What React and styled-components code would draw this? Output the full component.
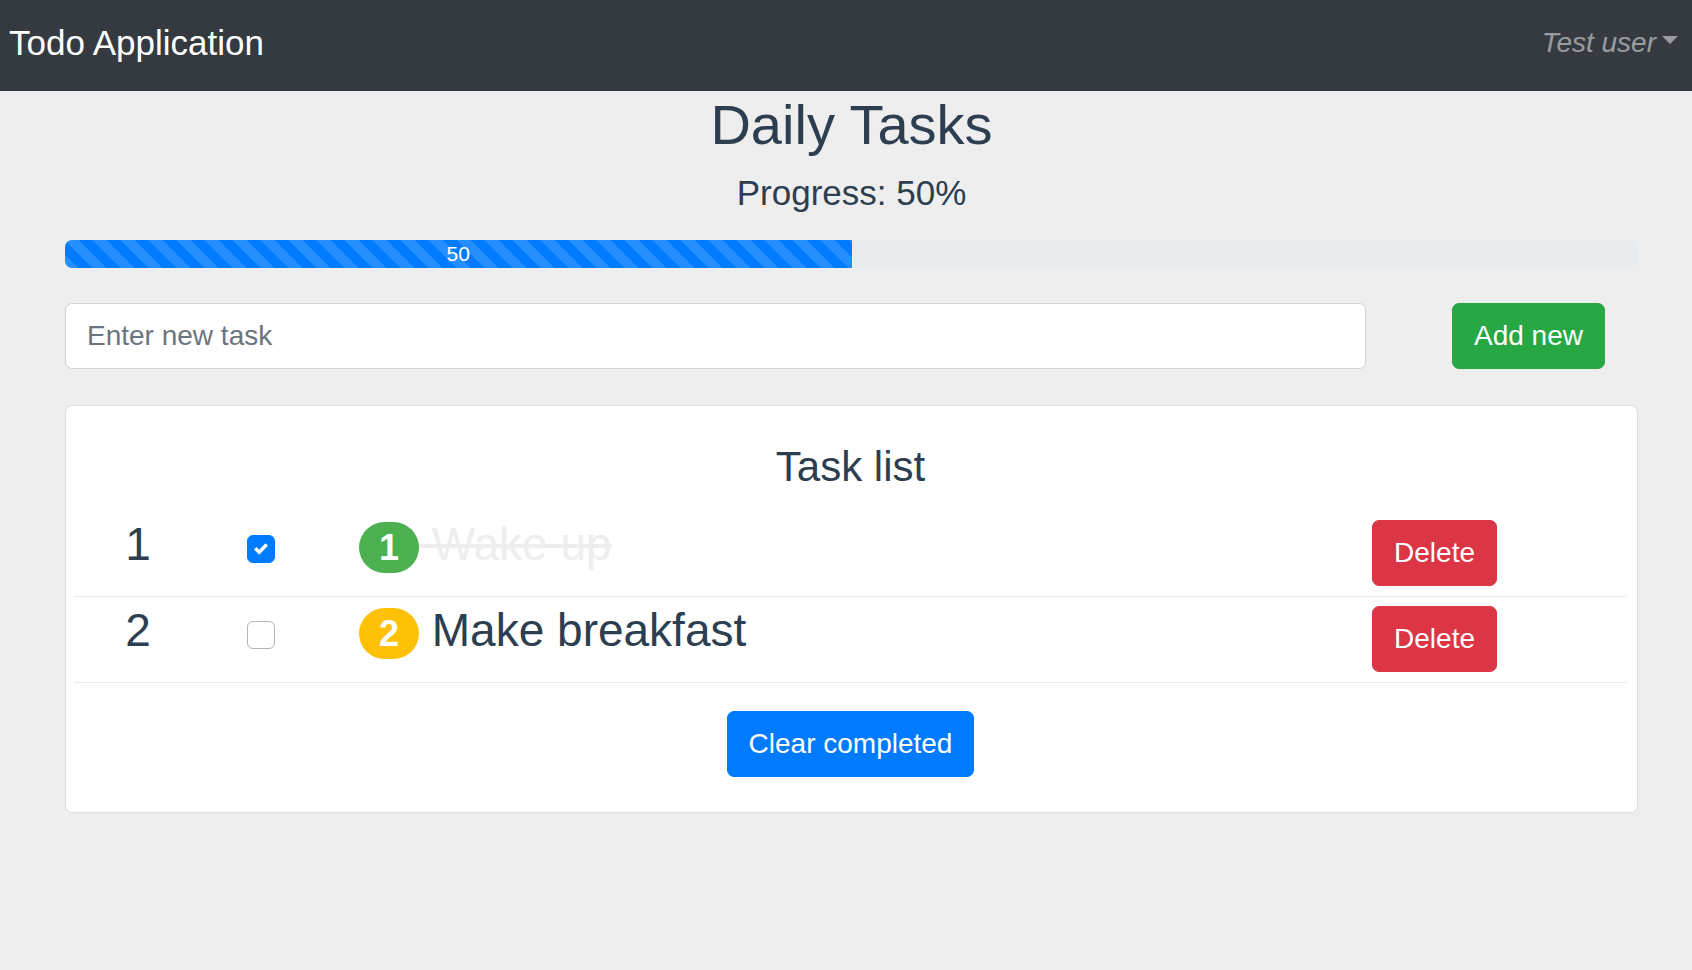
import styled, { createGlobalStyle } from "styled-components";

const GlobalStyle = createGlobalStyle`
  html, body {
    margin: 0;
    padding: 0;
    background: #eeeeee;
  }
  body {
    font-family: "Liberation Sans", Arial, sans-serif;
    color: #2c3e50;
  }
  * {
    box-sizing: border-box;
  }
`

const Navbar = styled.nav`
  display: flex;
  align-items: center;
  justify-content: space-between;
  height: 91px;
  padding: 0 14px 5px 9px;
  background-color: #343a40;
`

const Brand = styled.a`
  color: #ffffff;
  font-size: 35px;
  line-height: 1.5;
  text-decoration: none;
`

const UserMenu = styled.a`
  display: flex;
  align-items: center;
  color: rgba(255, 255, 255, 0.5);
  font-size: 28px;
  font-style: italic;
  line-height: 1.5;
  text-decoration: none;

  &::after {
    content: "";
    margin-left: 6px;
    margin-bottom: 6px;
    border-top: 8px solid currentColor;
    border-left: 8px solid transparent;
    border-right: 8px solid transparent;
  }
`

const Page = styled.main`
  padding: 0 54px 40px 65px;
  text-align: center;
`

const Title = styled.h2`
  margin: 0 0 14px;
  font-size: 56px;
  font-weight: 400;
  line-height: 1.2;
`

const Subtitle = styled.h5`
  margin: 0 0 26px;
  font-size: 35px;
  font-weight: 400;
  line-height: 1.2;
`

const Progress = styled.div`
  display: flex;
  height: 28px;
  overflow: hidden;
  border-radius: 7px;
  background-color: #e9ecef;
`

const ProgressFill = styled.div`
  color: #ffffff;
  font-size: 21px;
  line-height: 28px;
  text-align: center;
  background-color: #007bff;
  background-image: linear-gradient(
    45deg,
    rgba(255, 255, 255, 0.15) 25%,
    transparent 25%,
    transparent 50%,
    rgba(255, 255, 255, 0.15) 50%,
    rgba(255, 255, 255, 0.15) 75%,
    transparent 75%,
    transparent
  );
  background-size: 28px 28px;
`

const InputRow = styled.form`
  display: grid;
  grid-template-columns: 1fr 219px;
  column-gap: 53px;
  margin-top: 35px;
`

const TaskInput = styled.input`
  height: 66px;
  padding: 0 21px;
  font-family: inherit;
  font-size: 28px;
  color: #495057;
  background: #ffffff;
  border: 1px solid #ced4da;
  border-radius: 7px;
  outline: none;

  &::placeholder {
    color: #6c757d;
  }
`

const Button = styled.button`
  justify-self: center;
  height: 66px;
  padding: 0 21px;
  font-family: inherit;
  font-size: 28px;
  line-height: 1.5;
  color: #ffffff;
  border: 1px solid ${props => props.$color};
  border-radius: 7px;
  background-color: ${props => props.$color};
  cursor: pointer;
`

const Card = styled.section`
  margin-top: 36px;
  padding: 36px 10px 35px 8px;
  background: #ffffff;
  border: 1px solid rgba(0, 0, 0, 0.125);
  border-radius: 7px;
`

const CardTitle = styled.h4`
  margin: 0 0 18px;
  font-size: 42px;
  font-weight: 400;
  line-height: 1.2;
`

const Row = styled.div`
  display: grid;
  grid-template-columns: 128px 157px 1fr auto;
  align-items: center;
  height: 86px;
  padding-right: 130px;
  border-bottom: 1px solid #e9ecef;
`

const Index = styled.div`
  padding-bottom: 17px;
  font-size: 46px;
  line-height: 1.2;
  text-align: center;
`

const Check = styled.span`
  display: flex;
  align-items: center;
  justify-content: center;
  width: 28px;
  height: 28px;
  margin: 0 0 8px 45px;
  border: 1px solid ${props => (props.$checked ? "#007bff" : "#adb5bd")};
  border-radius: 6px;
  background: ${props => (props.$checked ? "#007bff" : "#ffffff")};
`

const Label = styled.div`
  display: flex;
  align-items: center;
  padding-bottom: 17px;
  text-align: left;
`

const Badge = styled.span`
  display: flex;
  align-items: center;
  justify-content: center;
  flex: 0 0 60px;
  height: 51px;
  margin-top: 6px;
  border-radius: 999px;
  background-color: ${props => props.$color};
  color: #ffffff;
  font-size: 36px;
  font-weight: 700;
  line-height: 1;
`

const TaskText = styled.span`
  font-size: 46px;
  line-height: 1.2;
  white-space: pre;
  color: ${props => (props.$done ? "#eeeeee" : "#2c3e50")};
  text-decoration: ${props => (props.$done ? "line-through" : "none")};
`

const Footer = styled.div`
  display: flex;
  justify-content: center;
  margin-top: 28px;
`

const tasks = [
  { id: 1, title: "Wake up", done: true, color: "#4caf50" },
  { id: 2, title: "Make breakfast", done: false, color: "#ffc107" },
]

const CheckIcon = () => (
  <svg width="14" height="14" viewBox="0 0 8 8">
    <path fill="#ffffff" d="M6.564.75l-3.59 3.612-1.538-1.55L0 4.26 2.974 7.25 8 2.193z" />
  </svg>
)

const App = () => {
  const progress = Math.round((tasks.filter(t => t.done).length / tasks.length) * 100)

  return (
    <>
      <GlobalStyle />
      <Navbar>
        <Brand href="#">Todo Application</Brand>
        <UserMenu href="#">Test user</UserMenu>
      </Navbar>

      <Page>
        <Title>Daily Tasks</Title>
        <Subtitle>Progress: {progress}%</Subtitle>

        <Progress>
          <ProgressFill style={{ width: `${progress}%` }}>{progress}</ProgressFill>
        </Progress>

        <InputRow onSubmit={e => e.preventDefault()}>
          <TaskInput placeholder="Enter new task" />
          <Button type="submit" $color="#28a745">Add new</Button>
        </InputRow>

        <Card>
          <CardTitle>Task list</CardTitle>
          {tasks.map((task, i) => (
            <Row key={task.id}>
              <Index>{i + 1}</Index>
              <Check $checked={task.done}>{task.done && <CheckIcon />}</Check>
              <Label>
                <Badge $color={task.color}>{task.id}</Badge>
                <TaskText $done={task.done}>{" " + task.title}</TaskText>
              </Label>
              <Button $color="#dc3545">Delete</Button>
            </Row>
          ))}
          <Footer>
            <Button $color="#007bff">Clear completed</Button>
          </Footer>
        </Card>
      </Page>
    </>
  )
}

export default App
